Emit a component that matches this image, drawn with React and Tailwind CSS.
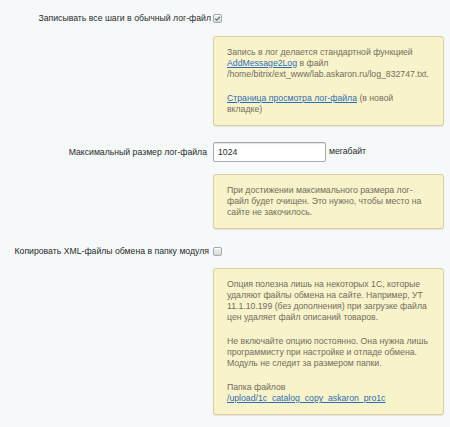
import React from "react";

function Checkbox({ checked }) {
  return (
    <span className="relative inline-block h-[9px] w-[9px] rounded-[2px] border border-[#a4a9ab] bg-gradient-to-b from-[#f3f4f4] to-[#d5d9da] shadow-[inset_0_1px_0_#fff]">
      {checked && (
        <svg viewBox="0 0 9 9" className="absolute left-[-1px] top-[-1px] h-[9px] w-[9px]">
          <path d="M2.2 4.6 L3.8 6.2 L7 2.6" fill="none" stroke="#6b7375" strokeWidth="1.2" />
        </svg>
      )}
    </span>
  );
}

function Hint({ children, className = "" }) {
  return (
    <div
      className={
        "col-start-2 w-[231px] rounded-[3px] border border-[#d9cf9f] bg-[#f9f3cb] px-[13px] py-[10px] text-[8.7px] leading-[11px] text-[#716d5c] shadow-[0_1px_1px_rgba(120,110,60,0.15)] " +
        className
      }
    >
      {children}
    </div>
  );
}

const linkCls = "text-[#2d6db5] underline";

export default function App() {
  return (
    <div
      className="min-h-[427px] w-[450px] bg-[#f5f9f9] pt-[13px] text-[8.7px] text-[#2a2a2a]"
      style={{ fontFamily: '"Liberation Sans", Arial, sans-serif' }}
    >
      <div className="grid grid-cols-[209px_auto] gap-x-[4px]">
        {/* Row 1 */}
        <div className="flex h-[11px] items-center justify-end text-right leading-[11px]">
          <span className="mr-[-2px]">Записывать все шаги в обычный лог-файл</span>
        </div>
        <div className="flex h-[11px] items-center">
          <Checkbox checked />
        </div>
        <Hint className="mt-[12px]">
          <p>
            Запись в лог делается стандартной функцией <span className={linkCls}>AddMessage2Log</span> в файл
            /home/bitrix/ext_www/lab.askaron.ru/log_832747.txt.
          </p>
          <p className="mt-[13px]">
            <span className={linkCls}>Страница просмотра лог-файла</span> (в новой вкладке)
          </p>
        </Hint>

        {/* Row 2 */}
        <div className="mt-[16px] flex h-[20px] items-center justify-end pr-[2px] text-right leading-[11px]">
          Максимальный размер лог-файла
        </div>
        <div className="mt-[16px] flex h-[20px] items-center gap-[3px]">
          <div className="flex h-[20px] w-[113px] items-center rounded-[2px] border border-[#a7acad] bg-white px-[4px] pt-[1px] shadow-[inset_0_1px_1px_rgba(0,0,0,0.12)]">
            1024
          </div>
          <span>мегабайт</span>
        </div>
        <Hint className="mt-[12px]">
          <p>
            При достижении максимального размера лог-файл будет очищен. Это нужно, чтобы место на сайте не
            закочилось.
          </p>
        </Hint>

        {/* Row 3 */}
        <div className="mt-[17px] flex h-[11px] items-center justify-end text-right leading-[11px]">
          Копировать XML-файлы обмена в папку модуля
        </div>
        <div className="mt-[17px] flex h-[11px] items-center">
          <Checkbox />
        </div>
        <Hint className="mt-[11px]">
          <p>
            Опция полезна лишь на некоторых 1С, которые удаляют файлы обмена на сайте. Например, УТ 11.1.10.199
            (без дополнения) при загрузке файла цен удаляет файл описаний товаров.
          </p>
          <p className="mt-[13px]">
            Не включайте опцию постоянно. Она нужна лишь программисту при настройке и отладе обмена. Модуль не
            следит за размером папки.
          </p>
          <p className="mt-[13px]">
            Папка файлов
            <br />
            <span className={linkCls}>/upload/1c_catalog_copy_askaron_pro1c</span>
          </p>
        </Hint>
      </div>
    </div>
  );
}
